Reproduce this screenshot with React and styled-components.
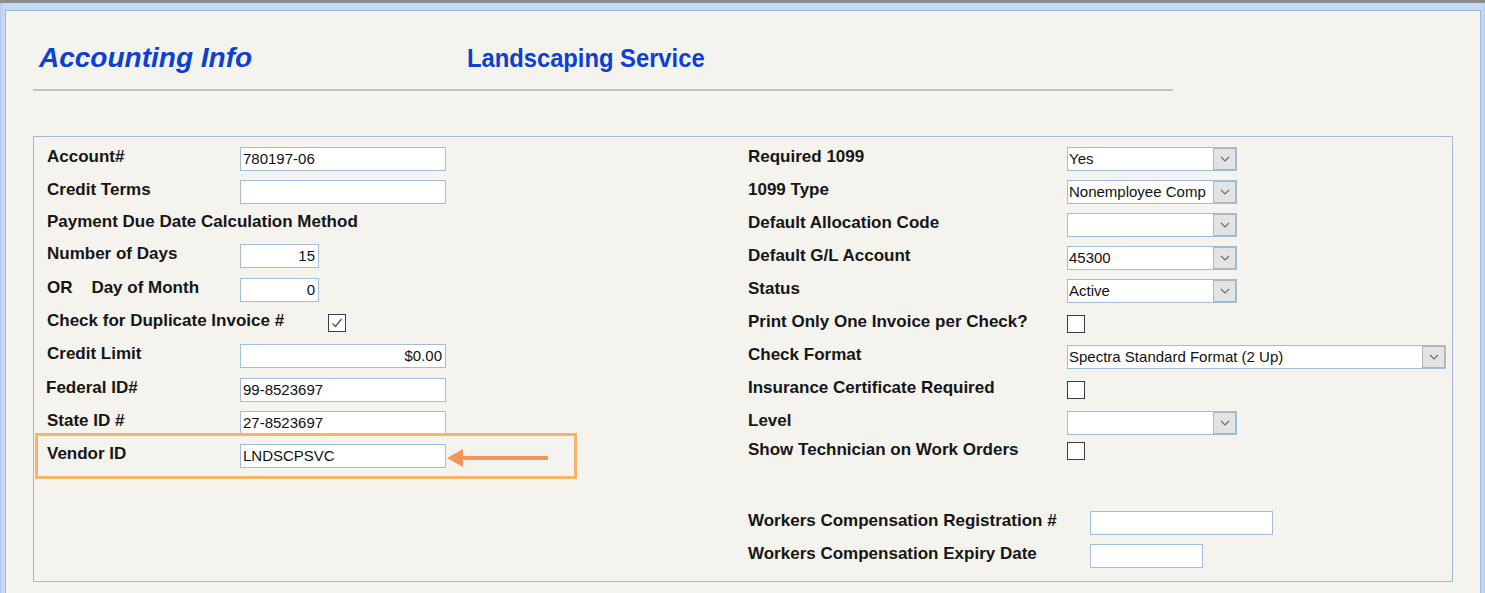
import styled, { createGlobalStyle } from "styled-components";

const Global = createGlobalStyle`
  html, body {
    margin: 0;
    padding: 0;
    background: #c6daf6;
  }
  body {
    font-family: "Liberation Sans", Arial, sans-serif;
  }
`;

const leftRows = [
  { label: "Account#", kind: "text", value: "780197-06", width: 206 },
  { label: "Credit Terms", kind: "text", value: "", width: 206, mb: -1 },
  { label: "Payment Due Date Calculation Method", kind: "none", mb: -1 },
  { label: "Number of Days", kind: "text", value: "15", width: 79, right: true, mb: 1 },
  { label: "OR\u00a0\u00a0\u00a0 Day of Month", kind: "text", value: "0", width: 79, right: true },
  { label: "Check for Duplicate Invoice #", kind: "check", checked: true, labelWidth: 281 },
  { label: "Credit Limit", kind: "text", value: "$0.00", width: 206, right: true, mb: 1 },
  { label: "Federal ID#", kind: "text", value: "99-8523697", width: 206, shift: -1 },
  { label: "State ID #", kind: "text", value: "27-8523697", width: 206 },
];

const rightRows = [
  { label: "Required 1099", kind: "select", value: "Yes", width: 170 },
  { label: "1099 Type", kind: "select", value: "Nonemployee Comp", width: 170 },
  { label: "Default Allocation Code", kind: "select", value: "", width: 170 },
  { label: "Default G/L Account", kind: "select", value: "45300", width: 170 },
  { label: "Status", kind: "select", value: "Active", width: 170 },
  { label: "Print Only One Invoice per Check?", kind: "check" },
  { label: "Check Format", kind: "select", value: "Spectra Standard Format (2 Up)", width: 379 },
  { label: "Insurance Certificate Required", kind: "check" },
  { label: "Level", kind: "select", value: "", width: 170 },
  { label: "Show Technician on Work Orders", kind: "check", h: 24, mb: 9 },
];

const Chevron = () => (
  <svg width="10" height="6" viewBox="0 0 10 6">
    <path d="M1 1 L5 5 L9 1" fill="none" stroke="#6a6a6a" strokeWidth="1.1" />
  </svg>
);

const Tick = () => (
  <svg width="14" height="14" viewBox="0 0 14 14">
    <path d="M2.5 7.5 L5.5 10.5 L11.5 3" fill="none" stroke="#555" strokeWidth="1.3" />
  </svg>
);

const Control = ({ row }) => {
  if (row.kind === "text") {
    return (
      <TextBox $w={row.width} $right={row.right}>
        {row.value}
      </TextBox>
    );
  }
  if (row.kind === "select") {
    return (
      <Select $w={row.width}>
        <SelectText>{row.value}</SelectText>
        <DropButton>
          <Chevron />
        </DropButton>
      </Select>
    );
  }
  if (row.kind === "check") {
    return <CheckBox>{row.checked && <Tick />}</CheckBox>;
  }
  return null;
};

const App = () => {
  return (
    <>
      <Global />
      <Frame>
        <Panel>
          <Header>
            <Title>Accounting Info</Title>
            <VendorName>Landscaping Service</VendorName>
          </Header>
          <Rule />
          <GroupBox>
            <Column $w={701}>
              {leftRows.map((r) => (
                <Row key={r.label} $mb={r.mb}>
                  <Label $w={r.labelWidth || 193} $shift={r.shift}>
                    {r.label}
                  </Label>
                  <Control row={r} />
                </Row>
              ))}
              <Row $annotated>
                <Label $w={193}>Vendor ID</Label>
                <TextBox $w={206}>LNDSCPSVC</TextBox>
                <Highlight />
                <Arrow width="102" height="20" viewBox="0 0 102 20">
                  <polygon points="0,10 16,1 16,19" fill="#f0965a" />
                  <rect x="15" y="8" width="86" height="4" fill="#f0965a" />
                </Arrow>
              </Row>
            </Column>
            <Column>
              {rightRows.map((r) => (
                <Row key={r.label} $h={r.h} $mb={r.mb}>
                  <Label $w={319}>{r.label}</Label>
                  <Control row={r} />
                </Row>
              ))}
              <Spacer />
              <Row>
                <Label $w={342}>Workers Compensation Registration #</Label>
                <TextBox $w={183} />
              </Row>
              <Row>
                <Label $w={342}>Workers Compensation Expiry Date</Label>
                <TextBox $w={113} />
              </Row>
            </Column>
          </GroupBox>
        </Panel>
      </Frame>
    </>
  );
};

export default App;

const Frame = styled.div`
  height: 593px;
  box-sizing: border-box;
  overflow: hidden;
  border-top: 3px solid #8c8c8c;
  padding: 7px 4px 0 5px;
  background: linear-gradient(to right, #b4cbee 0, #c6daf6 3px, #c6daf6 calc(100% - 3px), #b4cbee 100%);
`;

const Panel = styled.div`
  height: 100%;
  background: #f4f3ee;
  border: 1px solid #9cb6dc;
  border-bottom: none;
  box-sizing: border-box;
`;

const Header = styled.div`
  display: flex;
  align-items: center;
  height: 40px;
  padding: 27px 0 0 33px;
`;

const Title = styled.div`
  width: 428px;
  font-family: "Liberation Sans", Arial, sans-serif;
  font-style: italic;
  font-weight: bold;
  font-size: 28px;
  color: #0b3fd6;
  line-height: 40px;
`;

const VendorName = styled.div`
  font-family: "Liberation Sans", Arial, sans-serif;
  font-weight: bold;
  font-size: 25px;
  color: #0b3fd6;
  line-height: 40px;
  transform: scaleX(0.95);
  transform-origin: left center;
`;

const Rule = styled.div`
  margin: 11px 0 0 27px;
  width: 1140px;
  height: 2px;
  background: #c4c2b8;
`;

const GroupBox = styled.div`
  display: flex;
  margin: 45px 0 0 27px;
  width: 1420px;
  box-sizing: border-box;
  border: 1px solid #a3b9d6;
  padding: 5px 0 9px 13px;
`;

const Column = styled.div`
  display: flex;
  flex-direction: column;
  flex: none;
  width: ${(p) => (p.$w ? `${p.$w}px` : "auto")};
`;

const Row = styled.div`
  position: ${(p) => (p.$annotated ? "relative" : "static")};
  display: flex;
  align-items: center;
  height: ${(p) => p.$h || 33}px;
  margin-bottom: ${(p) => p.$mb || 0}px;
`;

const Spacer = styled.div`
  height: 34px;
`;

const Label = styled.div`
  flex: none;
  width: ${(p) => p.$w}px;
  margin-left: ${(p) => p.$shift || 0}px;
  padding-right: ${(p) => -(p.$shift || 0)}px;
  padding-bottom: 3px;
  font-family: "Liberation Sans", Arial, sans-serif;
  font-weight: bold;
  font-size: 17px;
  color: #161616;
  white-space: nowrap;
`;

const TextBox = styled.div`
  flex: none;
  width: ${(p) => p.$w}px;
  height: 24px;
  box-sizing: border-box;
  border: 1px solid #a2bcdc;
  background: #fff;
  padding: 0 3px 0 2px;
  font-family: "Liberation Sans", Arial, sans-serif;
  font-size: 15px;
  line-height: 22px;
  color: #111;
  text-align: ${(p) => (p.$right ? "right" : "left")};
  white-space: nowrap;
  overflow: hidden;
`;

const Select = styled.div`
  flex: none;
  display: flex;
  width: ${(p) => p.$w}px;
  height: 24px;
  box-sizing: border-box;
  border: 1px solid #a2bcdc;
  background: #fff;
`;

const SelectText = styled.div`
  flex: 1;
  min-width: 0;
  padding-left: 1px;
  font-family: "Liberation Sans", Arial, sans-serif;
  font-size: 15px;
  line-height: 22px;
  color: #111;
  white-space: nowrap;
  overflow: hidden;
`;

const DropButton = styled.div`
  flex: none;
  display: flex;
  align-items: center;
  justify-content: center;
  width: 23px;
  box-sizing: border-box;
  border: 1px solid #b4b4b4;
  background: #e3e3e3;
`;

const CheckBox = styled.div`
  flex: none;
  display: flex;
  align-items: center;
  justify-content: center;
  width: 18px;
  height: 18px;
  box-sizing: border-box;
  border: 1px solid #3c3c3c;
  background: #fff;
`;

const Highlight = styled.div`
  position: absolute;
  left: -12px;
  top: -6px;
  width: 542px;
  height: 46px;
  box-sizing: border-box;
  border: 3px solid #f5b466;
  pointer-events: none;
`;

const Arrow = styled.svg`
  position: absolute;
  left: 400px;
  top: 9px;
`;
